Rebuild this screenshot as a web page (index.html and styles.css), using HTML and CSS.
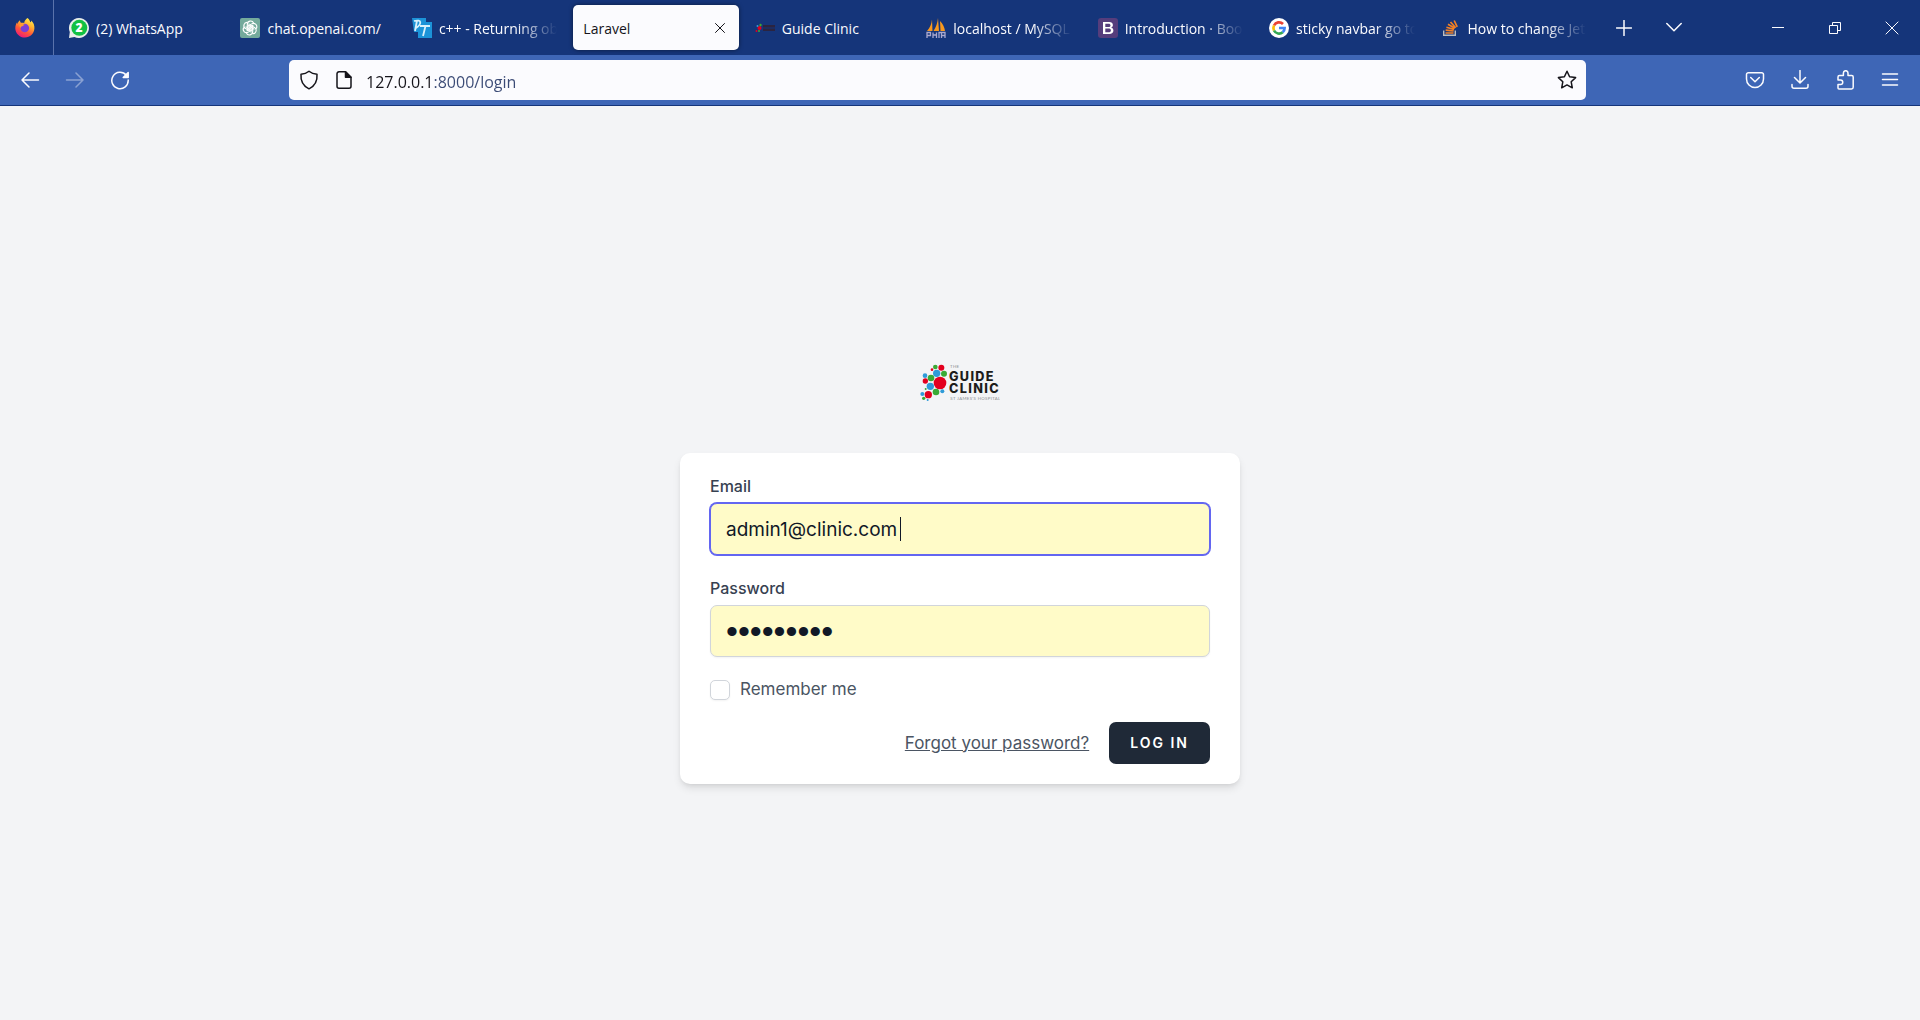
FILE: index.html
```html
<!DOCTYPE html>
<html lang="en">
<head>
<meta charset="utf-8">
<meta name="viewport" content="width=device-width, initial-scale=1">
<title>Laravel</title>
<link rel="stylesheet" href="styles.css">
</head>
<body>
<header class="browser">
  <div class="tab-bar">
    <button class="firefox-view" type="button" aria-label="Firefox View">
      <svg width="20" height="20" viewBox="0 0 20 20">
        <defs>
          <linearGradient id="flame" x1="0.8" y1="0" x2="0.3" y2="1"><stop offset="0" stop-color="#fff44f"/><stop offset="0.35" stop-color="#ffb030"/><stop offset="0.65" stop-color="#ff5a36"/><stop offset="1" stop-color="#f0157c"/></linearGradient>
        </defs>
        <path fill="url(#flame)" d="M12.400 0c2.100 1.400 2.600 3.100 2.800 4.200.9-.1 1.100-1 1-1.600 2.300 2 3.500 4.800 3.200 8C18.900 15.900 15 19.600 10 19.600 4.600 19.600.3 15.300.3 10.200.3 7.600 1.200 5.400 2.200 4.300c0 .8.1 1.300.4 1.700C3 4.300 3.800 2.900 5 2.200c0 1.200.3 2 .9 2.600 1.100-.3 2.500-.2 3.300.3C9.300 2.800 10.800 1.400 12.400 0z"/>
        <circle cx="9.800" cy="10" r="4.300" fill="#7a3fd6"/>
        <path fill="#ff9a2e" d="M4.200 7.200c1.700-1.400 3.900-1.500 5.600-.3-1.300.1-1.700.9-2.600 1.400-.9.500-1.800.6-1.700 2.200z"/>
      </svg>
    </button>
    <nav class="tabs">
      <a class="tab" href="#">
        <svg class="favicon" viewBox="0 0 20 20"><path fill="#e9edea" d="M10 0a10 10 0 1 1-4.600 18.900L0 20l.8-6A10 10 0 0 1 10 0z"/><circle cx="10.300" cy="9.800" r="8" fill="#12c143"/><text class="badge-digit" x="10" y="14" text-anchor="middle">2</text></svg>
        <span class="tab-title">(2) WhatsApp</span>
      </a>
      <a class="tab" href="#">
        <svg class="favicon" viewBox="0 0 20 20"><rect width="20" height="20" rx="2" fill="#74aa9c"/><g fill="none" stroke="#fff" stroke-width="1.100"><path id="petal" d="M7.300 11.500V6.400a3.300 3.300 0 0 1 6.300-1.400M9 9.400l4.400-2.500"/><use href="#petal" transform="rotate(60 10 10)"/><use href="#petal" transform="rotate(120 10 10)"/><use href="#petal" transform="rotate(180 10 10)"/><use href="#petal" transform="rotate(240 10 10)"/><use href="#petal" transform="rotate(300 10 10)"/></g></svg>
        <span class="tab-title">chat.openai.com/</span>
      </a>
      <a class="tab" href="#">
        <svg class="favicon" viewBox="0 0 20 20"><path fill="#1c93d8" d="M0 0h14v4h6v16H6v-6H2z"/><path fill="none" stroke="#d9f0fc" stroke-width="1.800" d="M5 2.500 3 13M2 3c8-2 8 3 2 7M8 8h10M13.500 8 11 18"/></svg>
        <span class="tab-title fade">c++ - Returning object</span>
      </a>
      <a class="tab tab-active" href="#" aria-current="page">
        <span class="tab-title">Laravel</span>
        <svg class="tab-close" width="10" height="10" viewBox="0 0 10 10"><path d="m.5.5 9 9m0-9-9 9"/></svg>
      </a>
      <a class="tab" href="#">
        <svg class="favicon" viewBox="0 0 20 20"><g fill="#2b2440"><path d="M8 7h12v2.500H8zM8 10.500h12V13H8z"/></g><circle cx="4.500" cy="10" r="2" fill="#e3001f"/><circle cx="2.500" cy="8" r="1" fill="#2f9bd8"/><circle cx="5.500" cy="7" r="1.200" fill="#3aaa35"/><circle cx="1.500" cy="13" r="1" fill="#e3001f"/><circle cx="4" cy="13" r="1" fill="#3aaa35"/></svg>
        <span class="tab-title">Guide Clinic</span>
      </a>
      <a class="tab" href="#">
        <svg class="favicon" viewBox="0 0 20 20"><path fill="#f8981d" d="M6 1.500 6.500 13H1C4 10 5.500 6 6 1.500zM12 0l1 13H7.500C10 9 11.500 5 12 0zM14 3c3 3 4.500 6 5 10h-4.500z"/><path fill="none" stroke="#a9a8cf" stroke-width="1.300" d="M1 20v-5.500h3.500v3H1M7 20v-5.500M7 17h3.500M10.500 20v-5.500M13 20v-5.500h2.500V20M15.500 14.500H19v3h-3.500M19 14.500V20"/></svg>
        <span class="tab-title fade">localhost / MySQL / clinic</span>
      </a>
      <a class="tab" href="#">
        <svg class="favicon" viewBox="0 0 20 20"><rect width="20" height="20" rx="3" fill="#563d7c"/><path fill="#fff" fill-rule="evenodd" d="M5 4h6.200c2.300 0 3.700 1.100 3.700 3 0 1.300-.8 2.300-2 2.600 1.600.3 2.500 1.400 2.500 3 0 2.200-1.500 3.400-4.100 3.400H5zm2.300 1.800V9h2.900c1.500 0 2.300-.6 2.300-1.600 0-1.100-.7-1.600-2-1.600zm0 4.800v3.600h3.200c1.600 0 2.400-.6 2.400-1.800s-.9-1.800-2.500-1.800z"/></svg>
        <span class="tab-title fade">Introduction · Bootstrap</span>
      </a>
      <a class="tab" href="#">
        <svg class="favicon" viewBox="0 0 20 20"><circle cx="10" cy="10" r="10" fill="#fff"/><g fill="none" stroke-width="2.700"><path stroke="#ea4335" d="M5 7.500A5.600 5.600 0 0 1 14 6"/><path stroke="#fbbc05" d="M5 12.500a5.600 5.600 0 0 1 0-5"/><path stroke="#34a853" d="M13.700 14.200A5.600 5.600 0 0 1 5 12.500"/><path stroke="#4285f4" d="M10 10h5.600a5.600 5.600 0 0 1-1.900 4.200"/></g></svg>
        <span class="tab-title fade">sticky navbar go to section</span>
      </a>
      <a class="tab" href="#">
        <svg class="favicon" viewBox="0 0 20 20"><path fill="none" stroke="#bcbbbb" stroke-width="1.400" d="M2.700 12.500v4.800h11.600v-4.800"/><path fill="none" stroke="#f48024" stroke-width="1.700" d="M4.500 15h8M4.700 12.200l7.900.8M5.400 9.200l7.600 2.200M7 6.300l6.800 4M9.500 4l5.200 5.800M13.200 2.500l3 6.400"/></svg>
        <span class="tab-title fade">How to change Jetstream</span>
      </a>
    </nav>
    <div class="tab-tools">
      <button class="tool" type="button" aria-label="New tab"><svg width="16" height="16" viewBox="0 0 16 16"><path d="M8 .5v15M.5 8h15"/></svg></button>
      <button class="tool" type="button" aria-label="List all tabs"><svg width="16" height="16" viewBox="0 0 16 16"><path d="m.8 3.500 7.200 7.200 7.200-7.200"/></svg></button>
    </div>
    <div class="window-controls">
      <button type="button" aria-label="Minimize"><svg width="12" height="12" viewBox="0 0 12 12"><path d="M0 5.500h12"/></svg></button>
      <button type="button" aria-label="Restore"><svg width="12" height="12" viewBox="0 0 12 12"><path d="M.5 3.500h8v8h-8zM3.500 3.500v-3h8v8h-3"/></svg></button>
      <button type="button" aria-label="Close"><svg width="14" height="14" viewBox="0 0 14 14"><path d="m.7.7 12.600 12.600m0-12.600L.7 13.300"/></svg></button>
    </div>
  </div>
  <div class="toolbar">
    <button class="tool" type="button" aria-label="Back"><svg width="20" height="20" viewBox="0 0 20 20"><path d="M18.500 10H2M9 3l-7 7 7 7"/></svg></button>
    <button class="tool tool-disabled" type="button" aria-label="Forward" disabled><svg width="20" height="20" viewBox="0 0 20 20"><path d="M1.500 10H18M11 3l7 7-7 7"/></svg></button>
    <button class="tool" type="button" aria-label="Reload"><svg width="20" height="20" viewBox="0 0 20 20"><path d="M16.300 5.200A8.200 8.200 0 1 0 18.200 10"/><path class="solid" d="M18.200 2.500v5h-5z"/></svg></button>
    <div class="address">
      <svg width="20" height="20" viewBox="0 0 20 20"><path d="M10 1.200C12.500 3.300 15 4 18 4.200c.5 6-1.300 11.300-8 14.600C3.300 15.500 1.500 10.200 2 4.200 5 4 7.500 3.300 10 1.200z"/></svg>
      <svg width="20" height="20" viewBox="0 0 20 20"><path d="M11.500 1.800H5a2 2 0 0 0-2 2v12.400a2 2 0 0 0 2 2h10a2 2 0 0 0 2-2V7.300z"/><path class="solid" d="M11.500 1.800v5.500H17z"/></svg>
      <input class="url-text" type="text" value="127.0.0.1:8000/login" aria-label="Address">
      <svg width="20" height="20" viewBox="0 0 20 20"><path d="m10 1.300 2.600 5.500 6 .8-4.400 4.200 1.100 6L10 14.900l-5.300 2.900 1.100-6L1.400 7.600l6-.8z"/></svg>
    </div>
    <button class="tool" type="button" aria-label="Save to Pocket"><svg width="20" height="20" viewBox="0 0 20 20"><path d="M3.300 2.800h13.400a1.800 1.800 0 0 1 1.800 1.800V9a8.500 8.500 0 0 1-17 0V4.600a1.800 1.800 0 0 1 1.800-1.800zM5.700 7.500 10 11.700l4.300-4.200"/></svg></button>
    <button class="tool" type="button" aria-label="Downloads"><svg width="20" height="20" viewBox="0 0 20 20"><path d="M10 .5v12M4.500 7.500l5.500 5.500 5.500-5.500M2 14.500v1.700a2 2 0 0 0 2 2h12a2 2 0 0 0 2-2v-1.700"/></svg></button>
    <button class="tool" type="button" aria-label="Extensions"><svg width="20" height="20" viewBox="0 0 20 20"><path d="M4 19h12.500a1.700 1.700 0 0 0 1.700-1.700V7a1.500 1.500 0 0 0-1.500-1.500h-3.700V3a2.300 2.300 0 0 0-4.600 0v2.500H4.500A1.500 1.500 0 0 0 3 7v3h2.500a2.200 2.200 0 0 1 0 4.500H3V18a1 1 0 0 0 1 1z"/></svg></button>
    <button class="tool" type="button" aria-label="Menu"><svg width="20" height="20" viewBox="0 0 20 20"><path d="M2.500 4h15M2.500 9.500h15M2.500 15h15"/></svg></button>
  </div>
</header>

<main class="page">
  <a class="logo" href="#" aria-label="The Guide Clinic">
    <svg width="80" height="81" viewBox="60 -24 240 243">
      <g fill="#e3001f"><circle cx="120" cy="99" r="19"/><circle cx="124" cy="53" r="9"/><circle cx="76" cy="93" r="8"/><circle cx="85" cy="134" r="11"/><circle cx="96" cy="59" r="4"/></g>
      <g fill="#3aaa35"><circle cx="93" cy="84" r="10"/><circle cx="106" cy="51" r="7"/><circle cx="132" cy="71" r="9"/><circle cx="108" cy="126" r="10"/><circle cx="71" cy="145" r="5"/><circle cx="77" cy="117" r="3"/></g>
      <g fill="#2f9bd8"><circle cx="110" cy="70" r="11"/><circle cx="75" cy="77" r="7"/><circle cx="91" cy="109" r="11"/><circle cx="67" cy="132" r="6"/><circle cx="127" cy="124" r="6"/><circle cx="83" cy="150" r="3"/></g>
      <text class="logo-small" x="150" y="53">THE</text>
      <text class="logo-name" x="147" y="93">GUIDE</text>
      <text class="logo-name" x="147" y="129">CLINIC</text>
      <text class="logo-small" x="151" y="149">ST JAMES'S HOSPITAL</text>
    </svg>
  </a>
  <form class="card">
    <div class="field">
      <label for="email">Email</label>
      <div class="input-wrap">
        <input class="text-input is-focused" id="email" type="text" value="admin1@clinic.com" autocomplete="off">
        <span class="caret"></span>
      </div>
    </div>
    <div class="field">
      <label for="password">Password</label>
      <input class="text-input password-input" id="password" type="password" value="password1">
    </div>
    <label class="remember"><input type="checkbox"><span>Remember me</span></label>
    <div class="actions">
      <a class="forgot" href="#">Forgot your password?</a>
      <button class="submit" type="button">Log in</button>
    </div>
  </form>
</main>
</body>
</html>
```
FILE: styles.css
```css
* { box-sizing: border-box; }

body {
  margin: 0;
  min-height: 100vh;
  display: flex;
  flex-direction: column;
  background: #f3f4f6;
  font-family: Inter, "Liberation Sans", sans-serif;
}

button {
  padding: 0;
  border: 0;
  background: none;
  font: inherit;
  color: inherit;
}

/* Browser chrome */
.browser {
  font-family: "Open Sans", "Noto Sans", sans-serif;
  color: #fbfbfe;
  border-bottom: 1px solid #15357a;
}

.browser svg {
  flex: none;
  display: block;
}

.tab-bar {
  display: flex;
  height: 55px;
  background: #15357a;
}

.firefox-view {
  width: 54px;
  display: grid;
  place-items: center;
  padding-right: 3px;
  border-right: 1px solid #5a73ab;
}

.tabs {
  flex: 1;
  display: grid;
  grid-template-columns: repeat(9, minmax(0, 1fr));
  padding-left: 2px;
}

.tab {
  display: flex;
  align-items: center;
  gap: 7px;
  margin: 5px 3px;
  padding: 0 10px;
  border-radius: 5px;
  font-size: 14px;
  line-height: 20px;
  color: inherit;
  text-decoration: none;
}

.tab-active {
  background: #fbfbfe;
  color: #15141a;
  box-shadow: 0 0 4px rgba(0, 0, 0, 0.5);
}

.favicon {
  width: 20px;
  height: 20px;
}

.tab-title {
  flex: 1;
  min-width: 0;
  padding-top: 2px;
  overflow: hidden;
  white-space: nowrap;
}

.fade { mask-image: linear-gradient(to left, transparent, #000 40px); }

.tab-close { margin-right: 4px; }

.badge-digit {
  font: 800 12px "Open Sans", sans-serif;
  fill: #fff;
}

.tool svg,
.tab-close,
.address svg,
.window-controls svg {
  fill: none;
  stroke: currentColor;
  stroke-width: 1.5;
  stroke-linecap: round;
  stroke-linejoin: round;
}

.tool .solid,
.address .solid { fill: currentColor; }

.tab-bar .tab-close { stroke-width: 1; }

.tab-tools {
  display: flex;
  width: 150px;
}

.tab-tools .tool { width: 50px; }

.window-controls { display: flex; }

.window-controls button {
  width: 57px;
  display: grid;
  place-items: center;
}

.window-controls svg {
  stroke-width: 1;
  stroke-linecap: butt;
  stroke-linejoin: miter;
}

.toolbar {
  display: flex;
  align-items: center;
  height: 50px;
  padding: 0 8px 0 7px;
  background: #3e66b6;
}

.tool {
  width: 45px;
  height: 100%;
  display: grid;
  place-items: center;
}

.tool-disabled { opacity: 0.4; }

.address {
  flex: 1;
  display: flex;
  align-items: center;
  gap: 15px;
  height: 40px;
  margin: 0 146px 0 147px;
  padding: 0 9px 0 10px;
  border-radius: 5px;
  background: #fbfbfe;
  color: #15141a;
}

/* The host part of the address is darker than the rest */
.url-text {
  flex: 1;
  min-width: 0;
  height: 30px;
  margin-left: -3px;
  padding: 3px 0 0;
  border: 0;
  outline: none;
  font: 400 16px "Open Sans", "Noto Sans", sans-serif;
  color: transparent;
  background: linear-gradient(to right, #15141a 68px, #3a4a75 68px);
  background-clip: text;
}

/* Login page */
.page {
  flex: 1;
  display: flex;
  flex-direction: column;
  align-items: center;
  justify-content: center;
  gap: 30px;
}

.logo svg { display: block; }

.logo-name {
  font: 800 38px Inter, sans-serif;
  letter-spacing: 4px;
  fill: #1d1d1b;
}

.logo-small {
  font: 400 13px Lato, sans-serif;
  letter-spacing: 1px;
  fill: #8a8d90;
}

.card {
  width: 100%;
  max-width: 560px;
  padding: 20px 30px;
  border-radius: 10px;
  background: #fff;
  box-shadow: 0 5px 8px -1px rgba(0, 0, 0, 0.1), 0 2px 5px -2px rgba(0, 0, 0, 0.1);
}

.field {
  display: grid;
  gap: 5px;
  margin-bottom: 20px;
}

.field label {
  padding-top: 1px;
  font-size: 16px;
  font-weight: 500;
  line-height: 24px;
  color: #374151;
}

.input-wrap {
  position: relative;
  display: flex;
}

.text-input {
  width: 100%;
  height: 52px;
  padding: 0 15px;
  border: 1px solid #d1d5db;
  border-radius: 7px;
  background: #fffbc8;
  font: 400 19px Inter, sans-serif;
  color: #111827;
  outline: none;
  box-shadow: 0 1px 2px rgba(0, 0, 0, 0.05);
}

.is-focused {
  border-color: #6366f1;
  box-shadow: 0 0 0 1px #6366f1;
}

.caret {
  position: absolute;
  left: 190px;
  top: 14px;
  width: 1px;
  height: 24px;
  background: #111827;
}

.password-input { font: 400 34px "Liberation Sans", sans-serif; }

.remember {
  display: flex;
  align-items: center;
  gap: 10px;
  font-size: 17px;
  line-height: 25px;
  color: #4b5563;
}

.remember input {
  appearance: none;
  width: 20px;
  height: 20px;
  margin: 0;
  border: 1px solid #d1d5db;
  border-radius: 5px;
  background: #fff;
  box-shadow: 0 1px 2px rgba(0, 0, 0, 0.05);
}

.actions {
  display: flex;
  align-items: center;
  justify-content: flex-end;
  gap: 20px;
  margin-top: 20px;
}

.forgot {
  font-size: 17px;
  line-height: 25px;
  color: #4b5563;
}

.submit {
  height: 42px;
  padding: 0 21px;
  border-radius: 7px;
  background: #1f2937;
  color: #fff;
  font-size: 14px;
  font-weight: 600;
  line-height: 20px;
  letter-spacing: 2px;
  text-transform: uppercase;
}
```
